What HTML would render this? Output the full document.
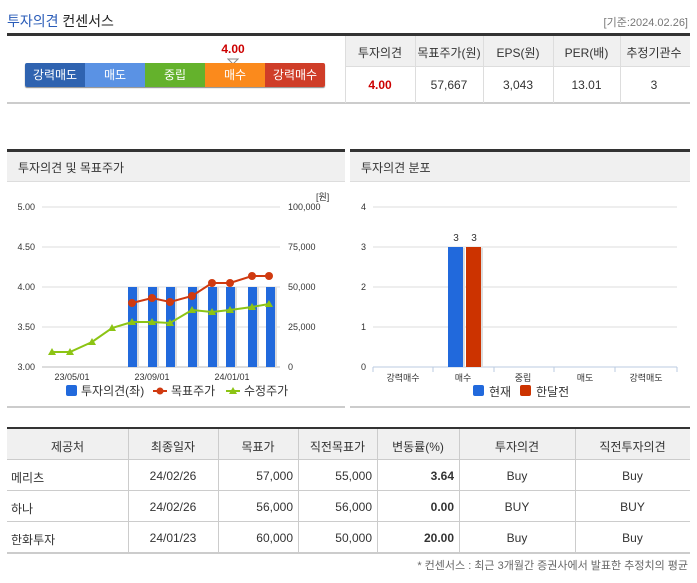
<!DOCTYPE html>
<html><head><meta charset="utf-8"><style>
*{margin:0;padding:0;box-sizing:border-box}
body{width:697px;height:583px;background:#fff;font-family:"Liberation Sans","Noto Sans CJK KR",sans-serif;font-size:12px;color:#333;position:relative;overflow:hidden}
.a{position:absolute}
.c{text-align:center}
.r{text-align:right}
</style></head><body>
<div class="a" style="left:7px;top:11px;font-size:14px;color:#222;font-weight:normal"><span style="color:#2a5cb8">투자의견</span> 컨센서스</div>
<div class="a" style="right:9px;top:14px;font-size:11px;color:#777">[기준:2024.02.26]</div>
<div class="a" style="left:7px;top:33px;width:683px;height:3px;background:#333"></div>
<div class="a" style="left:7px;top:102px;width:683px;height:2px;background:#ccc"></div>
<div class="a c" style="left:208px;top:42px;width:50px;font-weight:bold;color:#c00;font-size:12px">4.00</div>
<svg class="a" style="left:227px;top:58px" width="12" height="7"><path d="M1 1H11L6 6Z" fill="#fff" stroke="#888"/></svg>
<div class="a" style="left:25px;top:63px;width:300px;height:24px;display:flex;color:#fff;font-size:12px;border-radius:2px;overflow:hidden;box-shadow:0 1px 1px #888">
<div style="width:60px;background:#2f63b0;text-align:center;line-height:24px">강력매도</div>
<div style="width:60px;background:#5a92e4;text-align:center;line-height:24px">매도</div>
<div style="width:60px;background:#64b22c;text-align:center;line-height:24px">중립</div>
<div style="width:60px;background:#fb8a1c;text-align:center;line-height:24px">매수</div>
<div style="width:60px;background:#cf3d28;text-align:center;line-height:24px">강력매수</div>
</div>
<!-- top right table -->
<div class="a" style="left:345px;top:36px;width:345px;height:31px;background:#f0f0f0;border-bottom:1px solid #ddd"></div>
<div class="a" style="left:345px;top:36px;width:1px;height:67px;background:#ddd"></div>
<div class="a" style="left:415px;top:36px;width:1px;height:67px;background:#ddd"></div>
<div class="a" style="left:483px;top:36px;width:1px;height:67px;background:#ddd"></div>
<div class="a" style="left:553px;top:36px;width:1px;height:67px;background:#ddd"></div>
<div class="a" style="left:620px;top:36px;width:1px;height:67px;background:#ddd"></div>
<div class="a c" style="left:345px;top:44px;width:70px">투자의견</div>
<div class="a c" style="left:415px;top:44px;width:68px">목표주가(원)</div>
<div class="a c" style="left:483px;top:44px;width:70px">EPS(원)</div>
<div class="a c" style="left:553px;top:44px;width:67px">PER(배)</div>
<div class="a c" style="left:620px;top:44px;width:68px">추정기관수</div>
<div class="a c" style="left:345px;top:78px;width:70px;color:#c00;font-weight:bold">4.00</div>
<div class="a c" style="left:415px;top:78px;width:68px">57,667</div>
<div class="a c" style="left:483px;top:78px;width:70px">3,043</div>
<div class="a c" style="left:553px;top:78px;width:67px">13.01</div>
<div class="a c" style="left:620px;top:78px;width:68px">3</div>

<!-- left panel -->
<div class="a" style="left:7px;top:149px;width:338px;height:3px;background:#333"></div>
<div class="a" style="left:7px;top:152px;width:338px;height:30px;background:#f0f0f0;border-bottom:1px solid #ddd"></div>
<div class="a" style="left:18px;top:159px;font-size:12px">투자의견 및 목표주가</div>
<div class="a" style="left:7px;top:406px;width:338px;height:2px;background:#ccc"></div>
<svg class="a" style="left:0;top:0" width="345" height="410" font-family="Liberation Sans" font-size="9" fill="#333">
<g stroke="#ddd"><path d="M42 207H280M42 247H280M42 287H280M42 327H280"/></g>
<path d="M42 367H280" stroke="#bbb"/>
<g text-anchor="end"><text x="35" y="210">5.00</text><text x="35" y="250">4.50</text><text x="35" y="290">4.00</text><text x="35" y="330">3.50</text><text x="35" y="370">3.00</text></g>
<g><text x="288" y="210">100,000</text><text x="288" y="250">75,000</text><text x="288" y="290">50,000</text><text x="288" y="330">25,000</text><text x="288" y="370">0</text><text x="316" y="200">[원]</text></g>
<g text-anchor="middle"><text x="72" y="380">23/05/01</text><text x="152" y="380">23/09/01</text><text x="232" y="380">24/01/01</text></g>
<g fill="#ddd"><rect x="130" y="287" width="9" height="80"/><rect x="150" y="287" width="9" height="80"/><rect x="168" y="287" width="9" height="80"/><rect x="190" y="287" width="9" height="80"/><rect x="210" y="287" width="9" height="80"/><rect x="228" y="287" width="9" height="80"/><rect x="250" y="287" width="9" height="80"/><rect x="268" y="287" width="9" height="80"/></g>
<g fill="#2169dc"><rect x="128" y="287" width="9" height="80"/><rect x="148" y="287" width="9" height="80"/><rect x="166" y="287" width="9" height="80"/><rect x="188" y="287" width="9" height="80"/><rect x="208" y="287" width="9" height="80"/><rect x="226" y="287" width="9" height="80"/><rect x="248" y="287" width="9" height="80"/><rect x="266" y="287" width="9" height="80"/></g>
<polyline points="132,303 152,298 170,302 192,296 212,283 230,283 252,276 269,276" fill="none" stroke="#d03a10" stroke-width="2"/>
<g fill="#d03a10"><circle cx="132" cy="303" r="4"/><circle cx="152" cy="298" r="4"/><circle cx="170" cy="302" r="4"/><circle cx="192" cy="296" r="4"/><circle cx="212" cy="283" r="4"/><circle cx="230" cy="283" r="4"/><circle cx="252" cy="276" r="4"/><circle cx="269" cy="276" r="4"/></g>
<polyline points="52,352 70,352 92,342 112,328 132,322 152,322 170,323 192,310 212,312 230,310 252,307 269,304" fill="none" stroke="#8cc414" stroke-width="2"/>
<g fill="#8cc414">
<path d="M52 348l4 7h-8z"/><path d="M70 348l4 7h-8z"/><path d="M92 338l4 7h-8z"/><path d="M112 324l4 7h-8z"/><path d="M132 318l4 7h-8z"/><path d="M152 318l4 7h-8z"/><path d="M170 319l4 7h-8z"/><path d="M192 306l4 7h-8z"/><path d="M212 308l4 7h-8z"/><path d="M230 306l4 7h-8z"/><path d="M252 303l4 7h-8z"/><path d="M269 300l4 7h-8z"/></g>
<rect x="66" y="385" width="11" height="11" rx="2" fill="#2169dc"/>
<text x="81" y="395" font-size="12" fill="#333">투자의견(좌)</text>
<path d="M153 391H167" stroke="#d03a10" stroke-width="2"/><circle cx="160" cy="391" r="3.5" fill="#d03a10"/>
<text x="171" y="395" font-size="12" fill="#333">목표주가</text>
<path d="M226 391H240" stroke="#8cc414" stroke-width="2"/><path d="M233 387l4 7h-8z" fill="#8cc414"/>
<text x="244" y="395" font-size="12" fill="#333">수정주가</text>
</svg>

<!-- right panel -->
<div class="a" style="left:350px;top:149px;width:340px;height:3px;background:#333"></div>
<div class="a" style="left:350px;top:152px;width:340px;height:30px;background:#f0f0f0;border-bottom:1px solid #ddd"></div>
<div class="a" style="left:361px;top:159px;font-size:12px">투자의견 분포</div>
<div class="a" style="left:350px;top:406px;width:340px;height:2px;background:#ccc"></div>
<svg class="a" style="left:0;top:0" width="697" height="410" font-family="Liberation Sans" font-size="9" fill="#333">
<g stroke="#ddd"><path d="M373 207H677M373 247H677M373 287H677M373 327H677"/></g>
<path d="M373 367H677M373 367v5M433 367v5M494 367v5M554 367v5M615 367v5M677 367v5" stroke="#bbcbe0"/>
<g text-anchor="end"><text x="366" y="210">4</text><text x="366" y="250">3</text><text x="366" y="290">2</text><text x="366" y="330">1</text><text x="366" y="370">0</text></g>
<rect x="449" y="248" width="16" height="119" fill="#ddd"/><rect x="467" y="248" width="16" height="119" fill="#ddd"/>
<rect x="448" y="247" width="15" height="120" fill="#2169dc"/><rect x="466" y="247" width="15" height="120" fill="#cc3300"/>
<g text-anchor="middle" font-size="10"><text x="456" y="241">3</text><text x="474" y="241">3</text></g>
<g text-anchor="middle"><text x="403" y="381">강력매수</text><text x="463" y="381">매수</text><text x="523" y="381">중립</text><text x="585" y="381">매도</text><text x="646" y="381">강력매도</text></g>
<rect x="473" y="385" width="11" height="11" rx="2" fill="#2169dc"/>
<text x="489" y="396" font-size="12">현재</text>
<rect x="520" y="385" width="11" height="11" rx="2" fill="#cc3300"/>
<text x="536" y="396" font-size="12">한달전</text>
</svg>

<!-- bottom table -->
<div class="a" style="left:7px;top:427px;width:683px;height:2px;background:#333"></div>
<div class="a" style="left:7px;top:429px;width:683px;height:31px;background:#f0f0f0;border-bottom:1px solid #ccc"></div>
<div class="a" style="left:7px;top:490px;width:683px;height:1px;background:#ccc"></div>
<div class="a" style="left:7px;top:521px;width:683px;height:1px;background:#ccc"></div>
<div class="a" style="left:7px;top:552px;width:683px;height:2px;background:#ccc"></div>
<div class="a" style="left:128px;top:429px;width:1px;height:123px;background:#ccc"></div>
<div class="a" style="left:218px;top:429px;width:1px;height:123px;background:#ccc"></div>
<div class="a" style="left:298px;top:429px;width:1px;height:123px;background:#ccc"></div>
<div class="a" style="left:377px;top:429px;width:1px;height:123px;background:#ccc"></div>
<div class="a" style="left:459px;top:429px;width:1px;height:123px;background:#ccc"></div>
<div class="a" style="left:575px;top:429px;width:1px;height:123px;background:#ccc"></div>
<div class="a c" style="left:7px;top:438px;width:121px">제공처</div>
<div class="a c" style="left:128px;top:438px;width:90px">최종일자</div>
<div class="a c" style="left:218px;top:438px;width:80px">목표가</div>
<div class="a c" style="left:298px;top:438px;width:79px">직전목표가</div>
<div class="a c" style="left:377px;top:438px;width:82px">변동률(%)</div>
<div class="a c" style="left:459px;top:438px;width:116px">투자의견</div>
<div class="a c" style="left:575px;top:438px;width:115px">직전투자의견</div>

<div class="a" style="left:11px;top:469px">메리츠</div>
<div class="a c" style="left:128px;top:469px;width:90px">24/02/26</div>
<div class="a r" style="left:218px;top:469px;width:75px">57,000</div>
<div class="a r" style="left:298px;top:469px;width:74px">55,000</div>
<div class="a r" style="left:377px;top:469px;width:77px;font-weight:bold">3.64</div>
<div class="a c" style="left:459px;top:469px;width:116px">Buy</div>
<div class="a c" style="left:575px;top:469px;width:115px">Buy</div>

<div class="a" style="left:11px;top:500px">하나</div>
<div class="a c" style="left:128px;top:500px;width:90px">24/02/26</div>
<div class="a r" style="left:218px;top:500px;width:75px">56,000</div>
<div class="a r" style="left:298px;top:500px;width:74px">56,000</div>
<div class="a r" style="left:377px;top:500px;width:77px;font-weight:bold">0.00</div>
<div class="a c" style="left:459px;top:500px;width:116px">BUY</div>
<div class="a c" style="left:575px;top:500px;width:115px">BUY</div>

<div class="a" style="left:11px;top:531px">한화투자</div>
<div class="a c" style="left:128px;top:531px;width:90px">24/01/23</div>
<div class="a r" style="left:218px;top:531px;width:75px">60,000</div>
<div class="a r" style="left:298px;top:531px;width:74px">50,000</div>
<div class="a r" style="left:377px;top:531px;width:77px;font-weight:bold">20.00</div>
<div class="a c" style="left:459px;top:531px;width:116px">Buy</div>
<div class="a c" style="left:575px;top:531px;width:115px">Buy</div>

<div class="a r" style="right:9px;top:557px;font-size:11px;color:#666">* 컨센서스 : 최근 3개월간 증권사에서 발표한 추정치의 평균</div>
</body></html>
